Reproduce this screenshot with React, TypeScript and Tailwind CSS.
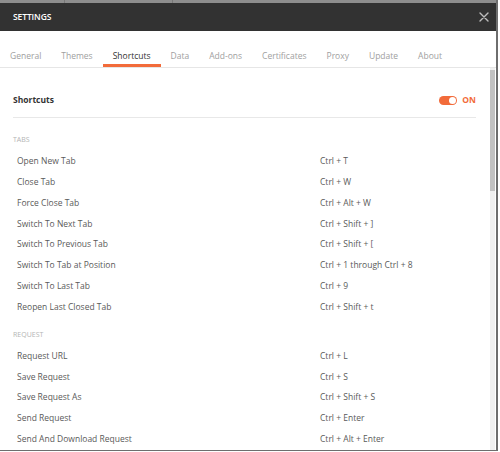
import { FC } from "react";

interface IShortcut {
  label: string;
  keys: string;
}

const tabs = [
  "General",
  "Themes",
  "Shortcuts",
  "Data",
  "Add-ons",
  "Certificates",
  "Proxy",
  "Update",
  "About",
];

const sections: { title: string; items: IShortcut[] }[] = [
  {
    title: "TABS",
    items: [
      { label: "Open New Tab", keys: "Ctrl + T" },
      { label: "Close Tab", keys: "Ctrl + W" },
      { label: "Force Close Tab", keys: "Ctrl + Alt + W" },
      { label: "Switch To Next Tab", keys: "Ctrl + Shift + ]" },
      { label: "Switch To Previous Tab", keys: "Ctrl + Shift + [" },
      { label: "Switch To Tab at Position", keys: "Ctrl + 1 through Ctrl + 8" },
      { label: "Switch To Last Tab", keys: "Ctrl + 9" },
      { label: "Reopen Last Closed Tab", keys: "Ctrl + Shift + t" },
    ],
  },
  {
    title: "REQUEST",
    items: [
      { label: "Request URL", keys: "Ctrl + L" },
      { label: "Save Request", keys: "Ctrl + S" },
      { label: "Save Request As", keys: "Ctrl + Shift + S" },
      { label: "Send Request", keys: "Ctrl + Enter" },
      { label: "Send And Download Request", keys: "Ctrl + Alt + Enter" },
    ],
  },
];

const Section: FC<{ title: string; items: IShortcut[]; first?: boolean }> = ({
  title,
  items,
  first,
}) => (
  <div className={first ? "mt-[12px]" : "mt-[7px]"}>
    <div className="h-[21px] flex items-center text-[7px] text-[#b4b4b4]">
      {title}
    </div>
    {items.map((item) => (
      <div
        key={item.label}
        className="h-[20.85px] grid grid-cols-[303px_1fr] items-center pl-[4px] text-[8.5px] text-[#5a5a5a]"
      >
        <span>{item.label}</span>
        <span>{item.keys}</span>
      </div>
    ))}
  </div>
);

export default function App() {
  return (
    <div className="w-[500px] h-[452px] bg-white overflow-hidden font-['Open_Sans',_'Liberation_Sans',_sans-serif]">
      <div className="w-[498px] h-[451px] flex flex-col border-r-2 border-b-[1px] border-[#6e6e6e]">
        <div className="h-[3px] bg-[#8e8e8e] flex">
          <div className="w-[65px] border-r border-[#777]" />
          <div className="w-[108px] border-r border-[#777]" />
        </div>
        <div className="h-[28px] bg-[#323232] flex items-center justify-between pl-[13px] pr-[7px]">
          <span className="text-white text-[8.5px] font-semibold tracking-[-0.1px]">
            SETTINGS
          </span>
          <svg width="10" height="10" viewBox="0 0 10 10">
            <path
              d="M1 1L9 9M9 1L1 9"
              stroke="#bdbdbd"
              strokeWidth="1.4"
              strokeLinecap="round"
            />
          </svg>
        </div>
        <div className="h-[37px] flex items-end border-b border-[#e6e6e6]">
          {tabs.map((t) => (
            <div
              key={t}
              className={`px-[10px] pb-[2px] border-b-[3px] leading-[12px] text-[8.5px] ${
                t === "Shortcuts"
                  ? "border-[#f26b3a] text-[#333]"
                  : "border-transparent text-[#a0a0a0]"
              }`}
            >
              {t}
            </div>
          ))}
        </div>
        <div className="flex-1 flex min-h-0">
          <div className="flex-1 pl-[13px] pr-[14px] overflow-hidden">
            <div className="mt-[22px] h-[20px] flex items-center justify-between">
              <span className="text-[8.5px] font-bold text-[#333]">
                Shortcuts
              </span>
              <div className="flex items-center gap-[5px]">
                <div className="w-[18px] h-[9px] rounded-full bg-[#f26b3a] flex items-center justify-end pr-[1px]">
                  <div className="w-[7px] h-[7px] rounded-full bg-white" />
                </div>
                <span className="text-[8.5px] font-bold text-[#f26b3a]">
                  ON
                </span>
              </div>
            </div>
            <div className="mt-[7px] h-px bg-[#e8e8e8]" />
            {sections.map((s, i) => (
              <Section key={s.title} title={s.title} items={s.items} first={i === 0} />
            ))}
          </div>
          <div className="w-[5px] mr-[1px] bg-[#f0f0f0] pt-[2px]">
            <div className="h-[121px] bg-[#c2c2c2]" />
          </div>
        </div>
      </div>
    </div>
  );
}
